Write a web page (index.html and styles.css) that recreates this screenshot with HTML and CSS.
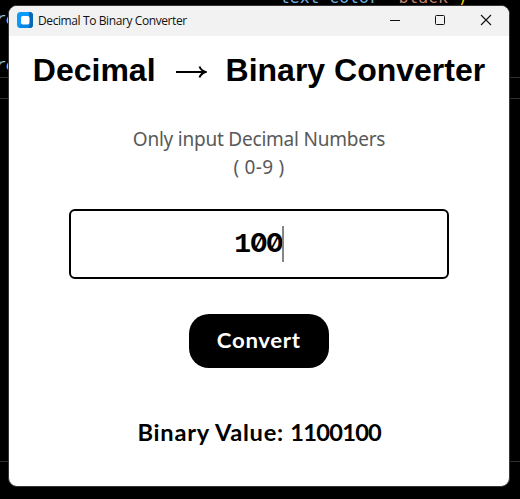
FILE: index.html
```
<!DOCTYPE html>
<html lang="en">
<head>
<meta charset="utf-8">
<title>Decimal To Binary Converter</title>
<link rel="stylesheet" href="styles.css">
</head>
<body>
<div class="editor" aria-hidden="true">
  <code class="code code-top"><span class="name">text_color</span><span class="op">=</span><span class="str">"black"</span><span class="paren">)</span></code>
  <code class="code code-first">re</code>
  <code class="code code-second">re</code>
  <div class="rule rule-a"></div>
  <div class="rule rule-b"></div>
  <div class="rule rule-c"></div>
</div>
<main class="window">
  <header class="titlebar">
    <svg class="app-icon" width="16" height="16" viewBox="0 0 16 16">
      <rect width="16" height="16" rx="3.5" fill="#0a9bfb"/>
      <path d="M12 0h.5A3.500 3.500 0 0 1 16 3.500v9a3.500 3.500 0 0 1-3.500 3.500H12z" fill="#0668b5"/>
      <path d="M4 12l-2 3.500 1.500.5H12l1-4z" fill="#0786e4"/>
      <rect x="4" y="4" width="8.500" height="8.500" rx="1.800" fill="#fff"/>
    </svg>
    <span class="title">Decimal To Binary Converter</span>
    <svg class="controls" width="110" height="16" viewBox="0 0 110 16" fill="none" stroke="#111">
      <path d="M5 7.500h10"/>
      <rect x="50.500" y="2.500" width="9" height="9" rx="1"/>
      <path d="M96 2l10 10M106 2L96 12" stroke-width="1.100"/>
    </svg>
  </header>
  <section class="content">
    <h1 class="heading"><span>Decimal</span><svg class="arrow" width="31" height="14" viewBox="0 0 31 14" fill="none" stroke="#000"><path d="M0 7h29" stroke-width="2"/><path d="M23.500 1.500Q25 5.500 29.500 7Q25 8.500 23.500 12.500" stroke-width="2"/></svg><span>Binary Converter</span></h1>
    <p class="hint"><span class="hint-main">Only input Decimal Numbers</span><br><span class="hint-range">( 0-9 )</span></p>
    <div class="field"><span class="digits">1<span class="zeros">00</span></span><span class="caret"></span></div>
    <button class="convert"><span class="convert-label">Convert</span></button>
    <p class="result"><span class="result-label">Binary Value: </span><span class="result-value">1100100</span></p>
  </section>
</main>
</body>
</html>
```
FILE: styles.css
```
* { box-sizing: border-box; }
body {
  margin: 0;
  width: 520px;
  height: 499px;
  overflow: hidden;
  background: #000;
  position: relative;
}
.editor { position: absolute; inset: 0; overflow: hidden; }
.code {
  position: absolute;
  font: 16.4px/20px "DejaVu Sans Mono", monospace;
  white-space: pre;
}
.code-top { left: 280px; top: -12px; }
.code-first { left: -4px; top: 10px; font-family: "Liberation Mono", monospace; font-style: italic; color: #85c9e8; }
.code-second { left: -4px; top: 56px; font-family: "Liberation Mono", monospace; font-style: italic; color: #85c9e8; }
.name { color: #6fb5e0; }
.op { color: #000; }
.str { color: #c0806a; }
.paren { color: #ffd700; }
.rule { position: absolute; left: 0; right: 0; height: 1px; background: #2e2e2e; }
.rule-a { top: 77px; }
.rule-b { top: 98px; }
.rule-c { top: 461px; }
.window {
  position: relative;
  width: 502px;
  height: 482px;
  margin: 5px 0 0 8px;
  border: 1px solid #353535;
  border-radius: 9px;
  background: #fff;
  overflow: hidden;
}
.titlebar {
  display: flex;
  align-items: center;
  height: 30px;
  padding: 0 14px 0 8px;
  background: #f2f2f2;
}
.title {
  margin-left: 5px;
  font: 12px/16px "Open Sans", sans-serif;
  letter-spacing: -0.4px;
  color: #111;
  white-space: nowrap;
}
.controls { margin: 0 0 0 auto; }
.app-icon { margin-top: -2px; }
.content { display: flex; flex-direction: column; align-items: center; }
.heading {
  display: flex;
  align-items: center;
  margin: 16px 0 0;
  font: bold 32px/37px "Liberation Sans", sans-serif;
  color: #000;
  white-space: nowrap;
}
.arrow { margin: 3px 19px 0 20px; }
.hint {
  margin: 36px 0 0;
  text-align: center;
  font: 19px/28px "Noto Sans", sans-serif;
  color: #595959;
  white-space: nowrap;
}
.hint-main { letter-spacing: -0.22px; }
.hint-range { letter-spacing: 0.3px; }
.field {
  display: flex;
  align-items: center;
  justify-content: center;
  width: 380px;
  height: 70px;
  margin-top: 28px;
  border: 2px solid #000;
  border-radius: 6px;
}
.digits {
  font: bold 28px/36px "Liberation Mono", monospace;
  letter-spacing: -1px;
  color: #000;
}
.zeros {
  font-family: "Inter", sans-serif;
  font-size: 26px;
  font-feature-settings: "zero" 1;
  letter-spacing: -1.7px;
}
.caret { width: 2px; height: 36px; margin-left: 0; background: #858585; }
.convert {
  width: 140px;
  height: 54px;
  margin-top: 35px;
  padding: 0 0 2px;
  border: 0;
  border-radius: 20px;
  background: #000;
  color: #fff;
  font: bold 20px/24px "Lato", sans-serif;
  letter-spacing: 0.6px;
}
.convert-label { display: inline-block; transform: scaleX(1.11); }
.result {
  margin: 51px 0 0;
  font: bold 22px/28px "Lato", sans-serif;
  color: #000;
  white-space: nowrap;
  transform: scaleX(1.075);
}
.result-label { letter-spacing: 0.68px; }
.result-value { letter-spacing: -0.7px; }
```
